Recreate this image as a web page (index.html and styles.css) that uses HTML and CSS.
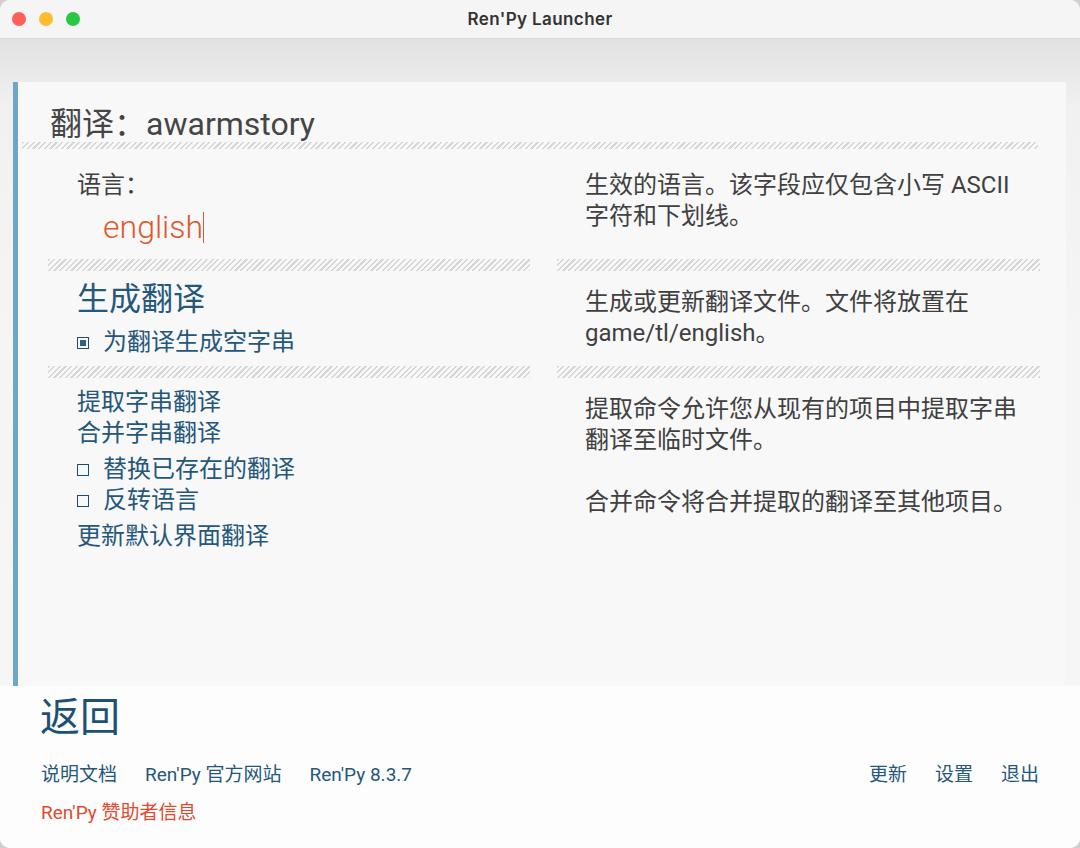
FILE: index.html
```html
<!DOCTYPE html>
<html lang="zh-CN">

<head>
    <meta charset="UTF-8">
    <meta name="viewport" content="width=device-width, initial-scale=1.0">
    <title>Ren'Py Launcher</title>
    <link rel="stylesheet" href="styles.css">
</head>

<body>
    <div class="window">
        <div class="titlebar">
            <div class="lights">
                <span class="light close"></span>
                <span class="light min"></span>
                <span class="light max"></span>
            </div>
            <div class="title">Ren'Py Launcher</div>
        </div>

        <div class="content">
            <div class="pane">
                <h1 class="pane-title">翻译<span class="colon">：</span>awarmstory</h1>
                <div class="rule thin"></div>

                <div class="rows">
                    <div class="cell first">
                        <div class="label">语言<span class="colon">：</span></div>
                        <div class="input">english<span class="caret"></span></div>
                    </div>
                    <div class="cell desc first">
                        生效的语言。该字段应仅包含小写 ASCII<br>字符和下划线。
                    </div>

                    <div class="rule"></div>
                    <div class="rule"></div>

                    <div class="cell">
                        <div class="big-button">生成翻译</div>
                        <div class="check on"><span class="box"></span>为翻译生成空字串</div>
                    </div>
                    <div class="cell desc">
                        生成或更新翻译文件。文件将放置在<br>game/tl/english。
                    </div>

                    <div class="rule"></div>
                    <div class="rule"></div>

                    <div class="cell">
                        <div class="button">提取字串翻译</div>
                        <div class="button">合并字串翻译</div>
                        <div class="check spaced"><span class="box"></span>替换已存在的翻译</div>
                        <div class="check"><span class="box"></span>反转语言</div>
                        <div class="button spaced">更新默认界面翻译</div>
                    </div>
                    <div class="cell desc">
                        提取命令允许您从现有的项目中提取字串<br>翻译至临时文件。<br><br>合并命令将合并提取的翻译至其他项目。
                    </div>
                </div>
            </div>

            <div class="footer">
                <div class="back">返回</div>
                <div class="links">
                    <div class="link-group">
                        <span>说明文档</span>
                        <span>Ren'Py 官方网站</span>
                        <span>Ren'Py 8.3.7</span>
                    </div>
                    <div class="link-group">
                        <span>更新</span>
                        <span>设置</span>
                        <span>退出</span>
                    </div>
                </div>
                <div class="sponsor">Ren'Py 赞助者信息</div>
            </div>
        </div>
    </div>
</body>

</html>
```

FILE: styles.css
```css
html,
body {
    margin: 0;
    height: 100%;
    background-color: #cfcfcf;
}

body {
    font-family: Roboto, "Noto Sans CJK SC", sans-serif;
    font-weight: 400;
    color: #3a3a3a;
}

.window {
    height: 848px;
    border-radius: 10px;
    overflow: hidden;
    display: flex;
    flex-direction: column;
    background-color: #fdfdfd;
}

/* mac title bar */
.titlebar {
    height: 38px;
    flex: none;
    position: relative;
    background-color: #f5f5f5;
    border-bottom: 1px solid #d9d9d9;
    display: flex;
    align-items: center;
    justify-content: center;
}

.lights {
    position: absolute;
    left: 12px;
    top: 12px;
    display: flex;
    gap: 13px;
}

.light {
    width: 14px;
    height: 14px;
    border-radius: 50%;
}

.close {
    background-color: #fe5f57;
}

.min {
    background-color: #febc2e;
}

.max {
    background-color: #28c840;
}

.title {
    font-family: Inter, "Liberation Sans", sans-serif;
    font-weight: 600;
    font-size: 17px;
    letter-spacing: 0.4px;
    color: #333333;
}

.content {
    flex: 1;
    background: linear-gradient(#e2e2e2 0px, #f1f1f1 70px, #f5f5f5 300px, #f6f6f6 646px, #fdfdfd 647px);
    padding-top: 43px;
}

.pane {
    margin-left: 13px;
    width: 1053px;
    height: 604px;
    box-sizing: border-box;
    border-left: 5px solid #6ea6c9;
    background-color: #f8f8f9;
    padding-top: 24px;
}

.pane-title {
    margin: 0 0 0 32px;
    font-size: 32px;
    font-weight: 400;
    line-height: 36px;
    color: #454545;
}

/* centred full-width colon, kept out of the line height */
.colon {
    font-family: "Noto Sans CJK TC", "Noto Sans CJK SC", sans-serif;
    line-height: 0;
}

.rule {
    height: 12px;
    background: repeating-linear-gradient(135deg, #d6d6d6 0px, #d6d6d6 1.6px, transparent 1.6px, transparent 4px);
}

.rule.thin {
    height: 7px;
    margin-left: 4px;
    width: 1016px;
}

.rows {
    margin-left: 30px;
    display: grid;
    grid-template-columns: 482px 483px;
    column-gap: 27px;
}

.cell {
    padding: 9px 0 8px 29px;
    font-size: 24px;
    line-height: 31px;
    color: #25577a;
}

.cell.desc {
    padding-top: 16px;
    padding-left: 28px;
    color: #404040;
}

.cell.first {
    padding-top: 21px;
    padding-bottom: 13px;
}

.label {
    color: #404040;
}

.input {
    margin: 7px 0 0 26px;
    font-size: 32px;
    font-weight: 300;
    line-height: 38px;
    color: #dd5a2c;
    display: flex;
    align-items: center;
}

.caret {
    width: 1px;
    height: 31px;
    background-color: #dd5a2c;
}

.big-button {
    font-size: 32px;
    line-height: 38px;
}

.check {
    display: flex;
    align-items: center;
    gap: 14px;
}

.big-button + .check {
    margin-top: 9px;
}

.spaced {
    margin-top: 5px;
}

.box {
    width: 12px;
    height: 12px;
    box-sizing: border-box;
    border: 1.5px solid #1f4d6c;
    display: flex;
    align-items: center;
    justify-content: center;
}

.check.on .box::after {
    content: "";
    width: 6px;
    height: 6px;
    background-color: #32607f;
}

.footer {
    padding: 8px 41px 0 40px;
    color: #25577a;
}

.back {
    font-size: 40px;
    line-height: 48px;
    color: #1d5173;
}

.links {
    margin-top: 20px;
    display: flex;
    justify-content: space-between;
    font-size: 19px;
    line-height: 26px;
}

.link-group {
    display: flex;
    gap: 28px;
}

.link-group span:first-child {
    margin-left: 1px;
}

.sponsor {
    margin: 12px 0 0 1px;
    font-size: 19px;
    line-height: 26px;
    color: #e4492f;
}
```
